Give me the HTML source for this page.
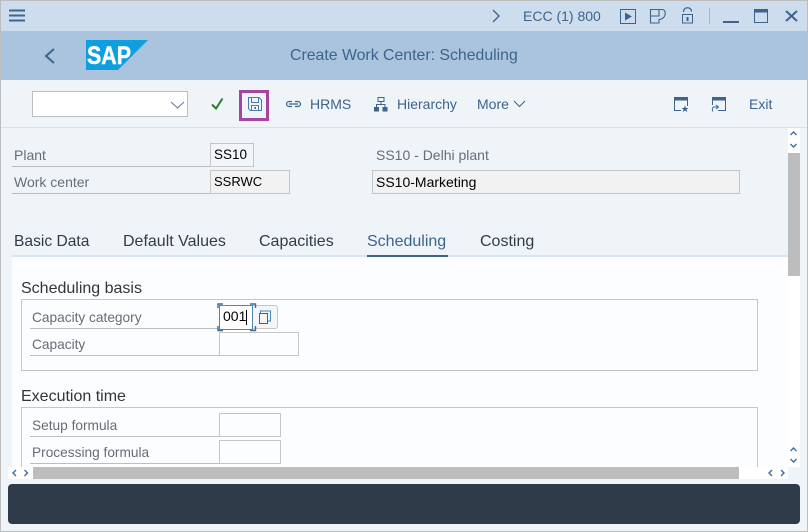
<!DOCTYPE html>
<html><head><meta charset="utf-8"><style>
*{box-sizing:border-box}
html,body{margin:0;padding:0}
body{width:808px;height:532px;position:relative;overflow:hidden;background:#eff4f9;font-family:"Liberation Sans",sans-serif}
.a{position:absolute}
.t{position:absolute;white-space:nowrap;line-height:18px;height:18px}
.blue{color:#3c648c}
.lbl{color:#666d76;font-size:14px}
.tab{color:#333b45;font-size:16px}
.sec{color:#32363a;font-size:16px}
.ln{position:absolute;height:1px;background:#bdbdbd}
.f{position:absolute;border:1px solid #c6c6c6;background:#fbfdff}
.g{background:#f2f2f2}
.v{position:absolute;color:#000;font-size:13.5px;line-height:18px;white-space:nowrap}
</style></head><body>
<div class="a" style="left:0;top:0;width:808px;height:31px;background:#cddded"></div>
<div class="a" style="left:0;top:31px;width:808px;height:1px;background:#b5c3cf"></div>
<div class="a" style="left:0;top:32px;width:808px;height:48px;background:#a9c4dc"></div>
<div class="a" style="left:0;top:127px;width:808px;height:1px;background:#d5e1ec"></div>

<div class="a" style="left:12px;top:257px;width:776px;height:210px;background:#fbfdff"></div>
<div class="a" style="left:12px;top:255px;width:776px;height:2px;background:#d8e4ef"></div>

<svg class="a" style="left:0;top:0" width="808" height="130" viewBox="0 0 808 130" fill="none">
<path d="M9 10.5H25M9 15.5H25M9 20.5H25" stroke="#3a6690" stroke-width="2"/>
<path d="M54 49L46 56L54 63" stroke="#3c648c" stroke-width="2"/>
<path d="M86 40H148L118 70H86Z" fill="#0f9fdf"/>
<path d="M493 10L499 16L493 22" stroke="#3c648c" stroke-width="1.3"/>
<rect x="620.5" y="9.5" width="15" height="14" stroke="#3c648c"/><path d="M625 12.5L632 16.500L625 20.500Z" fill="#3c648c"/>
<path d="M650.500 9.500H662C667 9.500 666.500 19 659 19.500V23H650.500ZM650.500 16H659V9.500" stroke="#3c648c" stroke-width="1.100"/>
<path d="M683.500 12V11.500C683.500 6.500 691.500 6.500 691.500 11.500" stroke="#3c648c" stroke-width="1.200"/><rect x="682.500" y="14.500" width="10" height="8.500" stroke="#3c648c"/><rect x="686.500" y="17" width="2" height="4" fill="#3c648c"/>
<rect x="709" y="8" width="1" height="16" fill="#aab8c4"/>
<rect x="723" y="21" width="16" height="2" fill="#3c648c"/>
<rect x="754.500" y="9.500" width="13" height="13" stroke="#3c648c"/><rect x="754" y="9" width="14" height="3.500" fill="#3c648c"/>
<path d="M786 11L797 21M797 11L786 21" stroke="#3c648c" stroke-width="2"/>
<rect x="32.500" y="91.500" width="155" height="25" fill="#fff" stroke="#bdbdbd"/>
<path d="M171 102L177.500 108L184 102" stroke="#5b82a8" stroke-width="1.100"/>
<path d="M212 104.500L216 108.500L222.500 98.500" stroke="#2b7d2b" stroke-width="2"/>
<rect x="240.500" y="91.500" width="27" height="28" stroke="#a545a0" stroke-width="3"/>
<path d="M248.500 97.500H259L261.500 100V110.500H250.500L248.500 108.500Z" stroke="#4a7cab"/>
<path d="M251.500 97.500V102.500H258.500V97.500M251.500 110V105.500H258.500V110" stroke="#4a7cab"/>
<rect x="254.500" y="107" width="1.500" height="2" fill="#3c648c"/>
<path d="M292 101.500H289.500C285.500 101.500 285.500 106.500 289.500 106.500H292M295 101.500H297.500C301.500 101.500 301.500 106.500 297.500 106.500H295M289 104H298" stroke="#3c648c" stroke-width="1.200"/>
<rect x="378" y="97.500" width="6" height="4" stroke="#3c648c"/><rect x="374" y="107" width="5" height="4.500" fill="#3c648c"/><rect x="382.500" y="107" width="5" height="4.500" fill="#3c648c"/>
<path d="M381 102V105M376.500 107V104.500H385V107" stroke="#3c648c"/>
<path d="M514 101L519.500 106.500L525 101" stroke="#3c648c" stroke-width="1.100"/>
<path d="M674.500 100V110.500H681M687.500 100V106" stroke="#3c648c"/><rect x="674" y="97" width="14" height="3.500" fill="#3c648c"/>
<path d="M685 105.500L686 108H688.500L686.500 109.500L687.300 112L685 110.500L682.700 112L683.500 109.500L681.500 108H684Z" fill="#3c648c"/>
<path d="M712.500 100V105M725.500 100V110.500H718" stroke="#3c648c"/><rect x="712" y="97" width="14" height="3.500" fill="#3c648c"/>
<path d="M718 107H713.500C712 108 712 110 713 111.500M716 105L718.500 107L716 109" stroke="#3c648c"/>
<text x="87" y="64" font-family="Liberation Sans" font-weight="700" font-size="25" fill="#fff" stroke="#fff" stroke-width=".5" textLength="44" lengthAdjust="spacingAndGlyphs">SAP</text>
</svg>

<div class="t blue" style="left:523px;top:7px;font-size:14px">ECC (1) 800</div>
<div class="t blue" style="left:290px;top:47px;font-size:15.850px">Create Work Center: Scheduling</div>
<div class="t blue" style="left:310px;top:95px;font-size:14px">HRMS</div>
<div class="t blue" style="left:397px;top:95px;font-size:14px">Hierarchy</div>
<div class="t blue" style="left:477px;top:95px;font-size:14px">More</div>
<div class="t blue" style="left:749px;top:95px;font-size:14px">Exit</div>

<div class="t lbl" style="left:14px;top:146px">Plant</div>
<div class="ln" style="left:12px;top:166px;width:198px"></div>
<div class="f" style="left:210px;top:143px;width:44px;height:24px;background:#f2f6fa"></div>
<div class="v" style="left:214px;top:146px">SS10</div>
<div class="t lbl" style="left:14px;top:173px">Work center</div>
<div class="ln" style="left:12px;top:193px;width:198px"></div>
<div class="f g" style="left:210px;top:170px;width:80px;height:24px"></div>
<div class="v" style="left:214px;top:173px;font-size:13px">SSRWC</div>
<div class="t lbl" style="left:376px;top:146px">SS10 - Delhi plant</div>
<div class="f g" style="left:372px;top:170px;width:368px;height:24px"></div>
<div class="v" style="left:376px;top:173px;font-size:14px">SS10-Marketing</div>

<div class="t tab" style="left:14px;top:233px;font-size:15.600px">Basic Data</div>
<div class="t tab" style="left:123px;top:233px">Default Values</div>
<div class="t tab" style="left:259px;top:233px">Capacities</div>
<div class="t tab" style="left:367px;top:233px;color:#3c648c">Scheduling</div>
<div class="a" style="left:367px;top:255px;width:81px;height:2px;background:#3c648c"></div>
<div class="t tab" style="left:480px;top:233px">Costing</div>

<div class="t sec" style="left:21px;top:280px">Scheduling basis</div>
<div class="a" style="left:21px;top:299px;width:737px;height:72px;border:1px solid #c6c6c6"></div>
<div class="t lbl" style="left:32px;top:309px;font-size:13.700px">Capacity category</div>
<div class="ln" style="left:30px;top:328px;width:189px"></div>
<div class="a" style="left:252px;top:305px;width:26px;height:24px;background:#f5f5f5;border:1px solid #c6c6c6;border-radius:0 3px 3px 0"></div>
<div class="a" style="left:219px;top:305px;width:34px;height:25px;background:#fff;border:1px solid #4f86b0"></div>
<svg class="a" style="left:217px;top:303px" width="66" height="30" fill="none">
<path d="M1 5V1H6M33 1H38.500V5M1 23V27.500H6M33 27.500H38.500V23" stroke="#3c6e96" stroke-width="1.400"/>
<path d="M43.500 10.500V8H53.500V18H51" stroke="#3c8cc8"/><rect x="42.500" y="10.500" width="8" height="10" stroke="#3c648c"/>
</svg>
<div class="v" style="left:223px;top:307px;font-size:14px">001</div>
<div class="a" style="left:246px;top:310px;width:1px;height:15px;background:#000"></div>
<div class="t lbl" style="left:32px;top:336px;font-size:13.700px">Capacity</div>
<div class="ln" style="left:30px;top:355px;width:189px"></div>
<div class="f" style="left:219px;top:332px;width:80px;height:24px"></div>

<div class="t sec" style="left:21px;top:388px">Execution time</div>
<div class="a" style="left:21px;top:407px;width:737px;height:60px;border:1px solid #c6c6c6;border-bottom:none"></div>
<div class="t lbl" style="left:32px;top:417px;font-size:13.700px">Setup formula</div>
<div class="ln" style="left:30px;top:436px;width:189px"></div>
<div class="f" style="left:219px;top:413px;width:62px;height:24px"></div>
<div class="t lbl" style="left:32px;top:444px;font-size:13.700px">Processing formula</div>
<div class="ln" style="left:30px;top:463px;width:189px"></div>
<div class="f" style="left:219px;top:440px;width:62px;height:24px"></div>

<div class="a" style="left:788px;top:128px;width:12px;height:339px;background:#fff"></div>
<div class="a" style="left:788px;top:153px;width:12px;height:123px;background:#bdbdbd"></div>
<div class="a" style="left:8px;top:467px;width:780px;height:12px;background:#fff"></div>
<div class="a" style="left:33px;top:467px;width:706px;height:12px;background:#bdbdbd"></div>
<svg class="a" style="left:0;top:120px" width="808" height="370" fill="none" stroke="#3c6e9c" stroke-width="1.400">
<path d="M790.500 15L793.500 12L796.500 15M790.500 24L793.500 27L796.500 24"/>
<path d="M790.500 331L793.500 328L796.500 331M790.500 339L793.500 342L796.500 339"/>
<path d="M16 350L13 353L16 356M24.500 350L27.500 353L24.500 356"/>
<path d="M772 350L769 353L772 356M781 350L784 353L781 356"/>
</svg>

<div class="a" style="left:8px;top:484px;width:792px;height:40px;background:#2f3b48;border-radius:4px"></div>

<div class="a" style="left:0;top:0;width:808px;height:1px;background:#bdbdbd"></div>
<div class="a" style="left:0;top:531px;width:808px;height:1px;background:#bdbdbd"></div>
<div class="a" style="left:0;top:0;width:1px;height:532px;background:#bdbdbd"></div>
<div class="a" style="left:807px;top:0;width:1px;height:532px;background:#bdbdbd"></div>
</body></html>
